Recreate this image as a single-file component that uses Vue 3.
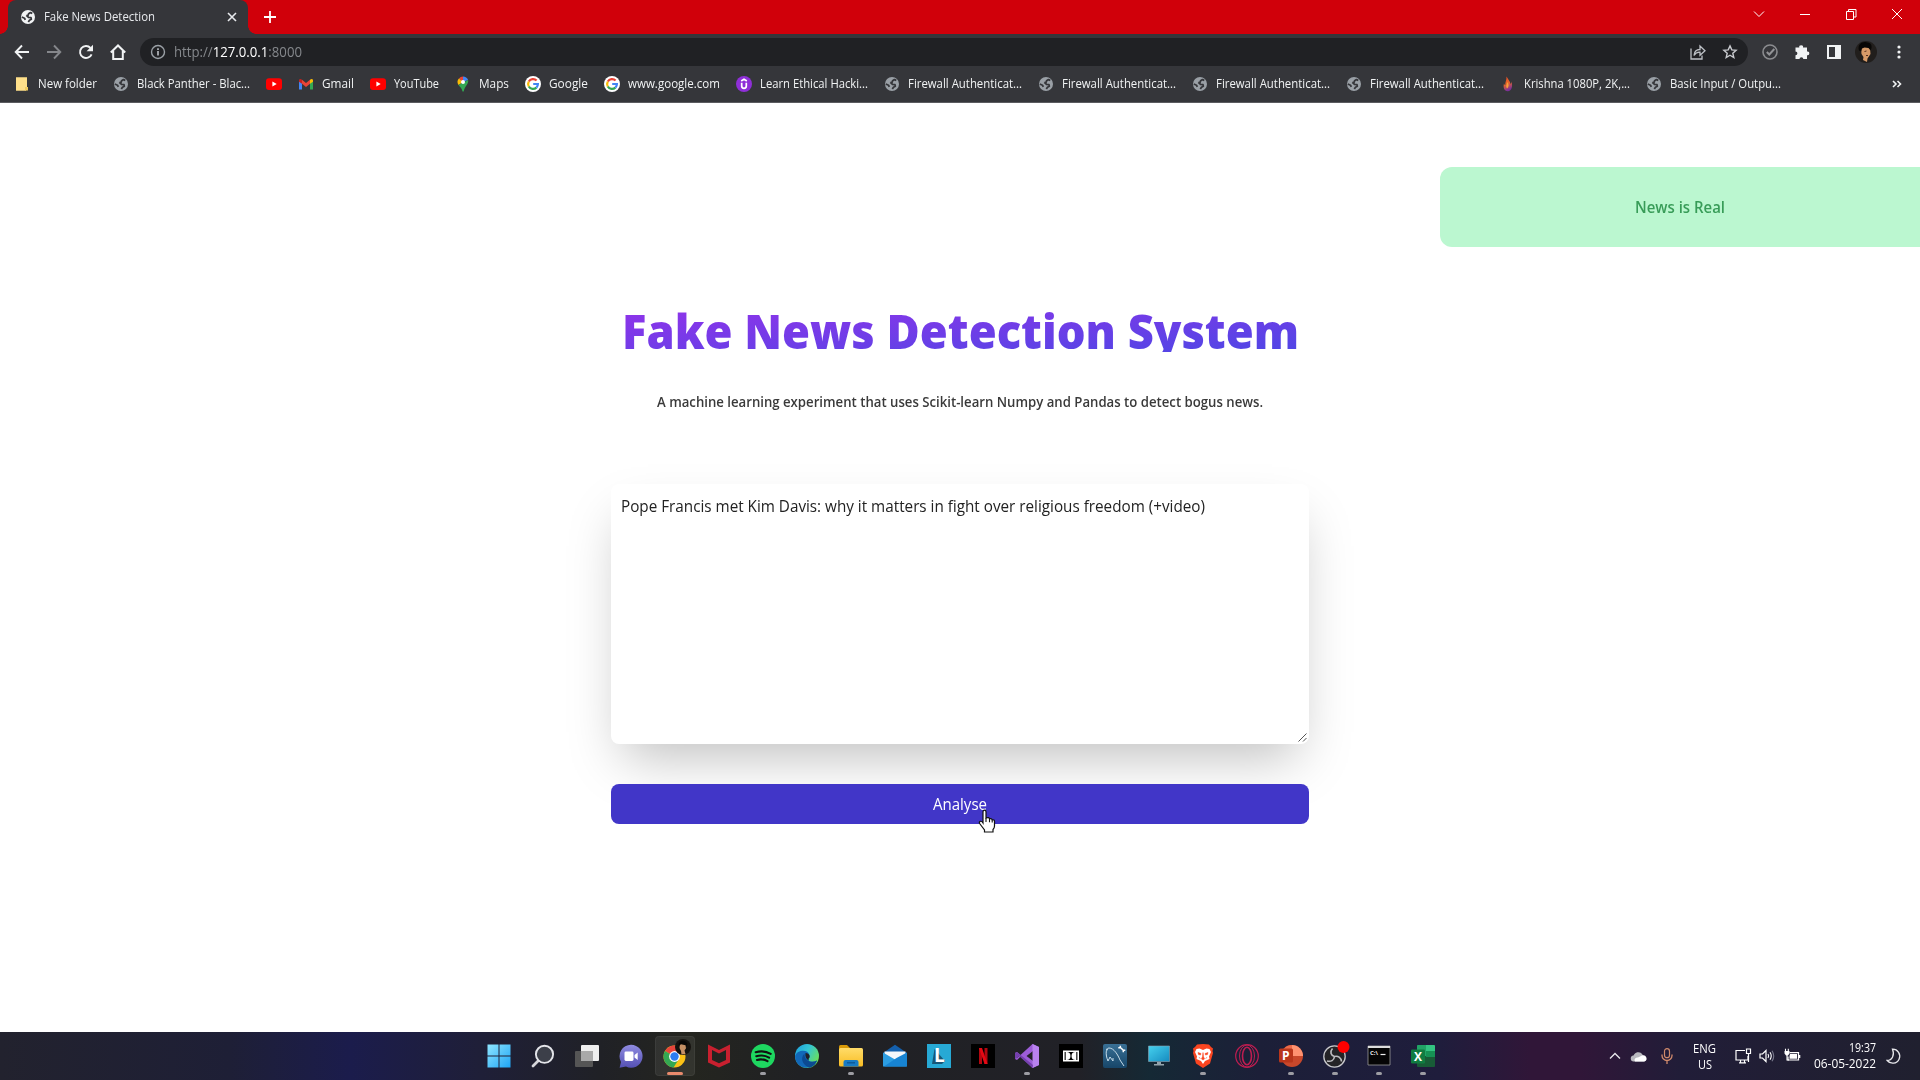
<script setup>
// Squeezes or stretches a line of text horizontally to the given width.
const vFit = {
  mounted(el, { value }) {
    const w = el.getBoundingClientRect().width
    el.style.transformOrigin = 'left center'
    el.style.transform = `scaleX(${value / w})`
    el.style.marginRight = `${value - w}px`
  },
}

const globe = (c) =>
  `<circle cx="8" cy="8" r="7" fill="${c}"/><path d="M12.300 4.300 10.500 3.600 8.600 4.800 8 6.300 6.300 6.600M6.300 6.400 8.500 8.300 11 8.600 11.300 10.300 9.500 11.300 8.300 13M1.800 8 4.500 9.200 5.300 10.800" fill="none" stroke="#35363a" stroke-width="1.800" stroke-linejoin="round"/>`
const youtube =
  '<rect x="0" y="2.3" width="16" height="11.6" rx="3" fill="#f00"/><path d="M6.4 5.6v5l4.3-2.5z" fill="#fff"/>'
const google =
  '<circle cx="8" cy="8" r="8" fill="#fff"/><g fill="none" stroke-width="2.2"><path d="M11.6 4.5A4.9 4.9 0 0 0 3.8 5.6" stroke="#ea4335"/><path d="M3.8 5.6a4.9 4.9 0 0 0 0 4.9" stroke="#fbbc05"/><path d="M3.8 10.5a4.9 4.9 0 0 0 7.6 1.1" stroke="#34a853"/><path d="M11.4 11.6A4.9 4.9 0 0 0 12.9 8H8.2" stroke="#4285f4"/></g>'
const grey = globe('#9aa0a6')

const bookmarks = [
  { t: 'New folder', w: 59, i: '<path d="M2 1.3h11v11l-1 2.4H2z" fill="#ffe08a"/><path d="M11 11h3v3.5h-3z" fill="#f2cd61"/>' },
  { t: 'Black Panther - Blac...', w: 113, i: grey },
  { t: '', w: 0, i: youtube },
  { t: 'Gmail', w: 32, i: '<path d="M1 4v9.5h3V7z" fill="#4285f4"/><path d="M15 4v9.5h-3V7z" fill="#34a853"/><path d="M4 3.8 8 7l4-3.2v4L8 11 4 7.8z" fill="#ea4335"/><path d="M1 4.6C1 2.7 2.6 2.6 4 3.8v4L1 5.8z" fill="#c5221f"/><path d="M15 4.6c0-1.9-1.6-2-3-.8v4l3-2z" fill="#fbbc04"/>' },
  { t: 'YouTube', w: 45, i: youtube },
  { t: 'Maps', w: 30, i: '<path d="M8 .6A5.3 5.3 0 0 0 3.9 2.5L8 6z" fill="#ea4335"/><path d="M8 .6c2.4 0 4.300 1.300 5.100 3.300L8 6z" fill="#4285f4"/><path d="M3.900 2.500A5.400 5.400 0 0 0 3.500 9L8 6z" fill="#fbbc04"/><path d="M13.100 3.900C14 8.200 9.600 10 8.700 15.400H7.500C7 12.300 5 11.200 3.500 9z" fill="#34a853"/><circle cx="8" cy="6" r="2" fill="#fff"/>' },
  { t: 'Google', w: 39, i: google },
  { t: 'www.google.com', w: 92, i: google },
  { t: 'Learn Ethical Hacki...', w: 108, i: '<circle cx="8" cy="8" r="8" fill="#8f2fd8"/><path d="M5.700 6.800V10a2.300 2.300 0 0 0 4.600 0V6.800M5.200 4.900 8 3.200l2.800 1.700" fill="none" stroke="#fff" stroke-width="1.700"/>' },
  { t: 'Firewall Authenticat...', w: 114, i: grey },
  { t: 'Firewall Authenticat...', w: 114, i: grey },
  { t: 'Firewall Authenticat...', w: 114, i: grey },
  { t: 'Firewall Authenticat...', w: 114, i: grey },
  { t: 'Krishna 1080P, 2K,...', w: 106, i: '<path d="M6.500.5c1 2 3.500 4.500 4 7.500 1.500-1 .8-3 .8-3 1.800 5 .5 10-3.500 10.300C4 15.200 3 11 4 7.500c.5 1 .8 1.500 1.300 1.500C5 6 6.800 4 6.500.5z" fill="url(#flame)"/><path d="M7.500 6c1.500 2.500 1.500 5-.5 6.500-1.500-2-.5-4 .5-6.500z" fill="#f9a13a"/>' },
  { t: 'Basic Input / Outpu...', w: 111, i: grey },
]

const apps = [
  { n: 'start', i: '<path d="M.5.500h11v11H.5zM12.500.500h11v11h-11zM.5 12.500h11v11H.5zM12.500 12.500h11v11h-11z" fill="url(#win)"/>' },
  { n: 'search', i: '<path d="M7.500 16.500 2 22" stroke="#d5d6da" stroke-width="2.800" stroke-linecap="round"/><circle cx="13.500" cy="10.300" r="8.600" fill="#3c3f49" stroke="#e4e5ea" stroke-width="1.900"/>' },
  { n: 'tasks', i: '<rect x="6" y="1" width="18" height="16" rx="1" fill="#eee"/><rect x="0" y="7" width="18" height="16" rx="1" fill="#555"/><path d="M6 7h12v10H6z" fill="#a9a9a9"/>' },
  { n: 'chat', i: '<path d="M12 .8A11.500 11.500 0 1 1 7 22.600L.6 23.700 2 18A11.500 11.500 0 0 1 12 .8z" fill="url(#chat)"/><rect x="5.500" y="7.500" width="9" height="9.500" rx="1.400" fill="#fff"/><path d="m15.500 11 3.200-2.500v7.500l-3.200-2.500z" fill="#fff"/>' },
  { n: 'chrome', active: true, i: '<circle cx="11.500" cy="12.500" r="11" fill="#fbc116"/><path d="M11.500 12.500 2 7A11 11 0 0 1 21 7z" fill="#e8453c"/><path d="M11.500 12.500 2 7a11 11 0 0 0 8.500 16.500L16 15z" fill="#34a853"/><circle cx="11.500" cy="12.500" r="5.400" fill="#fff"/><circle cx="11.500" cy="12.500" r="4.200" fill="#2d7cf0"/><circle cx="20" cy="3" r="8" fill="#15120f"/><path d="M17-1q3-2 6 .5l.5 4-2 3 1 3.500-4 .5-.5-3.500-1.500-3z" fill="#c69065"/><path d="M15.800 2c-1-6 7-7 8.500-2l-1 6-.8-4.800-4.500-1z" fill="#090807"/>' },
  { n: 'mcafee', i: '<path d="M1 .5 12 6 23 .5v18L12 23.500 1 18.500zM5 6v10l7 3.200 7-3.200V6l-7 3.500z" fill="#c8202f" fill-rule="evenodd"/>' },
  { n: 'spotify', dot: true, i: '<circle cx="12" cy="12" r="12" fill="#1ed760"/><path d="M4.700 8.200q8-2.200 15 1.600M5.300 12.200q7-2 12.800 1.500M6 15.900q5.800-1.500 10.500 1.300" fill="none" stroke="#111" stroke-width="2.100" stroke-linecap="round"/>' },
  { n: 'edge', i: '<circle cx="12" cy="12" r="12" fill="url(#edge)"/><path d="M.1 12C2 6 13 4.500 14.500 11.500 15 14 13.500 14 13.500 15.500c0 2.500 5 3 8.500 1-3 6-9 8.500-14.500 6.500C3 21 0 17 .1 12z" fill="#1268b8"/><path d="M9.500 9.500C4 15 9 22 14.500 23.700 18 23 21 20 22 16.500c-6 3.500-13 0-12.500-7z" fill="#0c4a91"/><path d="M13.500 15.500c0-1.500 1.500-1.500 1-4-.4-1.300-2-2.500-4-2.500-.5 3.500.5 6 3.500 7.500z" fill="#202126"/>' },
  { n: 'explorer', dot: true, i: '<path d="M0 2.500Q0 1 1.500 1H8l3 3-2 3H0z" fill="#d99a08"/><rect y="4" width="24" height="18.500" rx="1.500" fill="url(#folder)"/><path d="M4.500 22.500V18q0-2 2-2h11q2 0 2 2v4.500z" fill="#187bc4"/><path d="M8 18.800h8" stroke="#0c5593" stroke-width="1.300"/>' },
  { n: 'mail', i: '<path d="M0 9 12 .8 24 9v4H0z" fill="#1460ad"/><path d="M1.500 7.500h21V16l-10 4-11-4z" fill="#f4f7fa"/><path d="M0 8.500v14h24z" fill="#2c9de2"/><path d="M24 8.500v14H1L13.500 14z" fill="#1784d3"/>' },
  { n: 'letter', i: '<path d="M0 0h24v24H0z" fill="#27a9d5"/><path d="M7.500 5 5 20h10l3-3z" fill="#165777"/><text x="7" y="17.500" font-size="19" font-weight="700" fill="#fff">L</text>' },
  { n: 'netflix', i: '<path d="M0 0h24v24H0z" fill="#000"/><path d="M8 4h3v16H8zM13.500 4h3v16h-3z" fill="#b20710"/><path d="M8 4h3l5.500 16h-3z" fill="#e50914"/>' },
  { n: 'studio', dot: true, i: '<path d="m17.500 0 6.500 3v18l-6.500 3-12-11.500L2 16l-2-1V9l2-1 3.500 3zM18 7l-6.500 5 6.500 5zM2 10v4l2-2z" fill="#9c5dd7" fill-rule="evenodd"/><path d="m17.500 0 6.500 3v18l-6.500 3z" fill="#b982ef"/><path d="m0 9 2-1 16 13-.5 3L4 12 2 14l-2 1z" fill="#7540ae"/>' },
  { n: 'dolby', i: '<path d="M0 0h24v24H0z" fill="#000"/><path d="M4.800 7.300h14.400v9.400H4.800z" fill="none" stroke="#fff" stroke-width="1.600"/><path d="M6.700 8h.8a4 4 0 0 1 0 8h-.8zM17.300 8h-.8a4 4 0 0 0 0 8h.8z" fill="#fff"/>' },
  { n: 'mysql', i: '<rect width="24" height="24" rx="2" fill="url(#sql)"/><path d="M5 17C2 10 3 4 6 4c5 0 9 7 11 12l4 6M5 17l2-4 3 4v-3M3 5l2 1" fill="none" stroke="#c7dce9" stroke-width="1"/><path d="m17 3 4 4M17.300 1.800v2h-2M22.300 6.300h-2v2" fill="none" stroke="#fff" stroke-width="1.500"/>' },
  { n: 'pc', i: '<path d="M1.500 2h21v15.500h-21z" fill="url(#pc)" stroke="#8ba5b4" stroke-width=".6"/><path d="M10 18h4v2h3v1.500H7V20h3z" fill="#93a3ab"/>' },
  { n: 'brave', dot: true, i: '<path d="m6 .5 6-.5 6 .5 2 2.500 2 1.500-.5 2.500.500 2-3 10.500L12 24l-7-4.500L2 9l.5-2L2 4.500 4 3z" fill="#fa4520"/><path d="m5.500 5 3-.5L12 6l3.500-1.500 3 .5 1.500 3-2 4.500.5 2.500L14 17l-2 3-2-3-4.500-2L6 12.500 4 8z" fill="#fff"/><path d="m7 8.500 3 1-.5 1.500L7.500 10.500zM17 8.500l-3 1 .5 1.500 2-.5zM12 8.500l.5 4 1 2.500-1.500 1-1.500-1 1-2.500zM8 13l1.500 2M16 13l-1.500 2" fill="#fa4520" stroke="#fa4520" stroke-width=".5"/>' },
  { n: 'opera', i: '<g fill="none" stroke="#bd1d50"><circle cx="12" cy="12" r="11.300" stroke-width="1.200"/><ellipse cx="12" cy="12" rx="7.500" ry="11" stroke-width="1"/><ellipse cx="12" cy="12" rx="4.500" ry="8.700" stroke-width="1.600"/></g>' },
  { n: 'powerpoint', dot: true, i: '<circle cx="13" cy="12" r="11" fill="#c9482b"/><path d="M13 1a11 11 0 0 1 11 11H13z" fill="#ff9270"/><path d="M13 1a11 11 0 0 0-11 11h11z" fill="#ec6b4a"/><rect y="4.500" width="14" height="14" rx="1.500" fill="#b9361b"/><text x="3" y="16" font-size="12" font-weight="700" fill="#fff">P</text>' },
  { n: 'obs', dot: true, i: '<circle cx="11.500" cy="12.500" r="10.700" fill="#242326" stroke="#c7c7cb" stroke-width="1.300"/><path d="M9.500 4.500C6.500 8 8 11.500 11.500 12.500M11.500 12.500c3.500-1 6.500 1 7 5M11.500 12.500c-.5 4-3.500 5.500-7.500 4.500" fill="none" stroke="#bcbcc0" stroke-width="1.600"/><circle cx="20.500" cy="3" r="6" fill="#f00"/>' },
  { n: 'cmd', dot: true, i: '<path d="M1 2h22v19H1z" fill="#050505" stroke="#999" stroke-width=".8"/><path d="M1 2h22v2H1z" fill="#ddd"/><text x="3" y="11" font-size="6" font-weight="700" fill="#eee">C:\\</text><path d="M13.500 10.500h5" stroke="#eee" stroke-width="1.200"/>' },
  { n: 'excel', dot: true, i: '<rect x="6" y="1" width="18" height="22" rx="1" fill="#185c37"/><path d="M6 2q0-1 1-1h8v11H6z" fill="#21a366"/><path d="M15 1h8q1 0 1 1v5h-9z" fill="#33c481"/><path d="M15 7h9v6h-9z" fill="#169154"/><rect y="5.500" width="14" height="14" rx="1.300" fill="#107c41"/><text x="3" y="16.800" font-size="12" font-weight="700" fill="#fff">X</text>' },
]
</script>

<template>
  <div class="screen">
    <svg class="defs" width="0" height="0">
      <defs>
        <linearGradient id="flame" x1="0" y1="0" x2=".3" y2="1"><stop offset="0" stop-color="#f04a24" /><stop offset=".55" stop-color="#e5672a" /><stop offset="1" stop-color="#7b2f9a" /></linearGradient>
        <linearGradient id="win" x1="0" y1="0" x2="1" y2="1"><stop offset="0" stop-color="#8fe6ff" /><stop offset="1" stop-color="#1ea5f5" /></linearGradient>
        <linearGradient id="chat" x1="0" y1="0" x2="0" y2="1"><stop offset="0" stop-color="#8f8be0" /><stop offset="1" stop-color="#5450b4" /></linearGradient>
        <linearGradient id="edge" x1="0" y1="0" x2="1" y2=".6"><stop offset="0" stop-color="#1b9de0" /><stop offset=".5" stop-color="#34c5d4" /><stop offset="1" stop-color="#6ae05a" /></linearGradient>
        <linearGradient id="folder" x1="0" y1="0" x2="0" y2="1"><stop offset="0" stop-color="#ffdc69" /><stop offset="1" stop-color="#f9bd24" /></linearGradient>
        <linearGradient id="sql" x1="0" y1="0" x2="0" y2="1"><stop offset="0" stop-color="#397095" /><stop offset="1" stop-color="#174669" /></linearGradient>
        <linearGradient id="pc" x1="0" y1="0" x2="1" y2="1"><stop offset="0" stop-color="#45d1ee" /><stop offset="1" stop-color="#168bc0" /></linearGradient>
      </defs>
    </svg>

    <header class="tabs">
      <div class="tab">
        <svg class="i16" viewBox="0 0 16 16" v-html="globe('#f1f3f4')"></svg>
        <span v-fit="111" class="t tab-title">Fake News Detection</span>
        <svg class="tab-x" viewBox="0 0 10 10"><path d="m1 1 8 8M9 1 1 9" stroke="#e8eaed" stroke-width="1.6" /></svg>
      </div>
      <svg class="plus" viewBox="0 0 12 12"><path d="M6 0v12M0 6h12" stroke="#fff" stroke-width="1.8" /></svg>
      <div class="window-buttons">
        <svg viewBox="0 0 12 12"><path d="m1 3.500 5 5 5-5" /></svg>
        <svg viewBox="0 0 12 12"><path d="M1 6.500h10" /></svg>
        <svg viewBox="0 0 12 12"><path d="M1.500 3.500h7v8h-7zM3.500 3.500v-2h7.500v7.500H8.500" /></svg>
        <svg viewBox="0 0 12 12"><path d="m1 1 10 10M11 1 1 11" /></svg>
      </div>
    </header>

    <div class="toolbar">
      <svg class="i16" viewBox="0 0 16 16"><path d="M15 8H2M8 1.500 1.700 8 8 14.500" fill="none" stroke="#f1f3f4" stroke-width="1.900" /></svg>
      <svg class="i16" viewBox="0 0 16 16"><path d="M1 8h13M8 1.500 14.300 8 8 14.500" fill="none" stroke="#85878b" stroke-width="1.900" /></svg>
      <svg class="i16" viewBox="0 0 16 16"><path d="M13.600 10.300A6 6 0 1 1 12.500 4" fill="none" stroke="#f1f3f4" stroke-width="1.900" /><path d="M15 .8v6.400H8.600z" fill="#f1f3f4" /></svg>
      <svg class="i16" viewBox="0 0 16 16"><path d="M.8 8.500 8 1.500l7.200 7M3.200 7v8h9.600V7" fill="none" stroke="#f1f3f4" stroke-width="2" /></svg>
      <div class="omnibox">
        <svg class="i16" viewBox="0 0 16 16"><circle cx="8" cy="8" r="6.500" fill="none" stroke="#9aa0a6" stroke-width="1.400" /><path d="M8 7v4.500M8 4.300v1.600" stroke="#bdc1c6" stroke-width="1.600" /></svg>
        <span v-fit="128" class="t url">http://<b>127.0.0.1</b>:8000</span>
        <svg class="i16 share" viewBox="0 0 16 16"><path d="M1 4.500V15h11v-3.500M4 11.500c.3-4 2.500-6 6-6V2l5 4.700-5 4.600V8.200C7.500 8 5.500 9 4 11.500z" fill="none" stroke="#bdc1c6" stroke-width="1.300" /></svg>
        <svg class="i16" viewBox="0 0 16 16"><path d="m8 1.900 1.800 4 4.300.4-3.300 2.900 1 4.300L8 11.200l-3.800 2.300 1-4.300-3.300-2.900 4.300-.4z" fill="none" stroke="#c8cace" stroke-width="1.400" /></svg>
      </div>
      <svg class="i16" viewBox="0 0 16 16"><circle cx="8" cy="8" r="7" fill="none" stroke="#8b8c8f" stroke-width="1.600" /><path d="m4.800 8 2.500 2.500 5-5.500" fill="none" stroke="#929396" stroke-width="2" /></svg>
      <svg class="i16" viewBox="0 0 16 16"><path d="M1.500 3.500h3.800a1.900 1.900 0 1 1 3.700 0h4v4a1.900 1.900 0 1 1 0 3.700v3.900H9.300a1.900 1.900 0 0 0-3.800 0h-4v-3.900a1.900 1.900 0 0 0 0-3.800z" fill="#f1f3f4" /></svg>
      <svg class="i16" viewBox="0 0 16 16"><path d="M1 1h14v14H1zM3 3v10h6V3z" fill="#f1f3f4" fill-rule="evenodd" /></svg>
      <svg class="avatar" viewBox="0 0 22 22"><circle cx="11" cy="11" r="11" fill="#211e1c" /><path d="m6 7 4-2 5 2 .5 6-3 4.500-.5 3.500-4-2 .5-3-2-3z" fill="#d69a68" /><path d="M4 9.500C2 3 8 0 12 1.500c4-.5 6 4 3.500 8L13.500 7 9.500 6.500 7 7.500l-.8 3z" fill="#080706" /><path d="m9.500 10.500 2-.5M11 14.500h2" stroke="#553020" /></svg>
      <svg class="kebab" viewBox="0 0 4 16"><circle cx="2" cy="3" r="1.600" /><circle cx="2" cy="8" r="1.600" /><circle cx="2" cy="13" r="1.600" /></svg>
    </div>

    <nav class="bookmarks">
      <div v-for="(b, k) in bookmarks" :key="k" class="bookmark">
        <svg class="i16" viewBox="0 0 16 16" v-html="b.i"></svg>
        <span v-if="b.t" v-fit="b.w" class="t">{{ b.t }}</span>
      </div>
      <svg class="more" viewBox="0 0 10 8"><path d="m1 1 3 3-3 3M5.500 1l3 3-3 3" fill="none" stroke="#f1f3f4" stroke-width="1.600" /></svg>
    </nav>

    <main class="page">
      <div class="toast"><span v-fit="90" class="t">News is Real</span></div>
      <h1 v-fit="677" class="t">Fake News Detection System</h1>
      <p class="lead"><span v-fit="606" class="t">A machine learning experiment that uses Scikit-learn Numpy and Pandas to detect bogus news.</span></p>
      <div class="news">
        <span v-fit="584" class="t">Pope Francis met Kim Davis: why it matters in fight over religious freedom (+video)</span>
        <svg class="grip" viewBox="0 0 9 9"><path d="M.5 8.500l8-8M5 8.500l3.500-3.500" stroke="#555" stroke-width="1" /></svg>
      </div>
      <button class="analyse">
        <span v-fit="54" class="t">Analyse</span>
        <svg class="pointer" viewBox="0 0 18 24"><path d="M5 13V3q0-1.800 1.500-1.800T8 3v6q3-1 3.500.8 2.200-.6 2.700 1 2.300-.3 2.300 1.700V17q0 2-1.500 3.500V23H6.500v-2L2 15q-1.500-2.200.3-2.700Q3.700 12 5 14z" fill="#fff" stroke="#111" stroke-width="1.200" /><path d="M8 9v4M11.500 10v3.300M14.200 11v2.500" stroke="#111" stroke-width="1.100" /></svg>
      </button>
    </main>

    <footer class="taskbar">
      <div class="apps">
        <div v-for="a in apps" :key="a.n" class="app" :class="{ active: a.active }">
          <svg class="app-icon" viewBox="0 0 24 24" v-html="a.i"></svg>
          <i v-if="a.dot || a.active" class="run"></i>
        </div>
      </div>
      <div class="tray">
        <svg class="up" viewBox="0 0 12 8"><path d="m1 6.500 5-5 5 5" fill="none" stroke="#e8e8ec" stroke-width="1.300" /></svg>
        <svg class="cloud" viewBox="0 0 16 11"><path d="M3 10.500a3 3 0 0 1-.5-6A5 5 0 0 1 11 3l1.500 2a2.800 2.800 0 0 1 .5 5.500z" fill="#b9b9bf" /><path d="M4 10.500C2.500 8 5 6.500 7 6.500l4-2a3.200 3.200 0 0 1 2.500 6z" fill="#fff" /></svg>
        <svg class="mic" viewBox="0 0 12 16"><rect x="3.500" y=".7" width="5" height="9" rx="2.500" fill="none" stroke="#d08a6c" stroke-width="1.200" /><path d="M1 6.500v1a5 5 0 0 0 10 0v-1M6 12.500V16" fill="none" stroke="#d08a6c" stroke-width="1.300" /></svg>
        <div class="lang"><span v-fit="23" class="t">ENG</span><span v-fit="14" class="t">US</span></div>
        <svg class="i16 net" viewBox="0 0 16 16"><path d="M10 2.500H1v9.500h12V8M4 14.800h7M5.500 12v2.800M9.500 12v2.800" fill="none" stroke="#fff" stroke-width="1.200" /><path d="M11.500 1h4v4.500h-4zM13.500 5.500V14" fill="none" stroke="#fff" stroke-width="1.200" /></svg>
        <svg class="i16 vol" viewBox="0 0 16 16"><path d="M1 6h2.500L7 2.500v11L3.500 10H1z" fill="none" stroke="#fff" stroke-width="1.200" /><path d="M9 6q1.300 2 0 4M11 4.300q2.500 3.700 0 7.400" fill="none" stroke="#fff" stroke-width="1.100" /><path d="M13 2.700q3.500 5.300 0 10.600" fill="none" stroke="#77788a" stroke-width="1.100" /></svg>
        <svg class="i16 bat" viewBox="0 0 16 16"><path d="M5.500 4.600h9V12H4V8.500" fill="none" stroke="#fff" stroke-width="1.200" /><path d="M6 6h7v4.700H5.500V8zM15 7h1.300v3H15zM.5 3h5v2.500L4 7.500H2L.5 5.500z" fill="#fff" /><path d="M1.500.8V3M4.300.8V3M3 7v5h2" fill="none" stroke="#fff" stroke-width="1.100" /></svg>
        <div class="clock"><span v-fit="27" class="t">19:37</span><span v-fit="62" class="t">06-05-2022</span></div>
        <svg class="moon" viewBox="0 0 14 16"><path d="M6.500 1.200A7 7 0 1 1 1.200 12.500C6 12.500 9 7 6.500 1.200z" fill="none" stroke="#e8e8ec" stroke-width="1.300" /></svg>
      </div>
    </footer>
  </div>
</template>

<style>
body { margin: 0; }
</style>

<style scoped>
.screen {
  width: 1920px;
  height: 1080px;
  overflow: hidden;
  display: flex;
  flex-direction: column;
  font-family: "Open Sans", "Noto Sans", sans-serif;
  background: #fff;
}
.defs { position: absolute; }
svg { flex: none; display: block; overflow: visible; }
.i16 { width: 16px; height: 16px; }
.t { display: inline-block; flex: none; white-space: nowrap; }

.tabs { height: 34px; background: #d0000a; display: flex; align-items: flex-start; flex: none; }
.tab {
  position: relative;
  box-sizing: border-box;
  width: 240px;
  height: 34px;
  margin-left: 8px;
  padding: 0 11px 0 12px;
  display: flex;
  align-items: center;
  background: #35363a;
  border-radius: 8px 8px 0 0;
}
.tab::before, .tab::after { content: ""; position: absolute; bottom: 0; width: 8px; height: 8px; }
.tab::before { left: -8px; background: radial-gradient(circle at 0 0, transparent 7.5px, #35363a 8px); }
.tab::after { right: -8px; background: radial-gradient(circle at 100% 0, transparent 7.5px, #35363a 8px); }
.tab-title { margin-left: 8px; font-size: 12px; line-height: 16px; color: #e8eaed; }
.tab-x { width: 10px; height: 10px; margin-left: auto; }
.plus { width: 12px; height: 12px; margin: 11px 0 0 16px; }
.window-buttons { display: flex; gap: 34px; margin: 8px 17px 0 auto; }
.window-buttons svg { width: 12px; height: 12px; fill: none; stroke: #fff; stroke-width: 1; }

.toolbar { height: 36px; background: #35363a; display: flex; align-items: center; gap: 16px; padding: 0 19px 0 14px; flex: none; }
.omnibox {
  box-sizing: border-box;
  width: 1608px;
  height: 28px;
  margin-left: -2px;
  margin-right: -2px;
  padding: 0 10px;
  border-radius: 14px;
  background: #202124;
  display: flex;
  align-items: center;
}
.url { margin-left: 8px; font-size: 14px; line-height: 20px; color: #85888c; }
.url b { font-weight: 400; color: #fff; }
.share { margin: 0 16px 0 auto; }
.avatar { width: 22px; height: 22px; margin: 0 -3px; }
.kebab { width: 4px; height: 16px; fill: #f1f3f4; margin-left: auto; }

.bookmarks {
  box-sizing: border-box;
  height: 33px;
  padding: 0 18px 4px 14px;
  background: #35363a;
  border-bottom: 1px solid #5b5c60;
  display: flex;
  align-items: center;
  gap: 16px;
  font-size: 12px;
  line-height: 16px;
  color: #f1f3f4;
  flex: none;
}
.bookmark { display: flex; align-items: center; gap: 8px; }
.more { width: 10px; height: 8px; margin-left: auto; }

.page { height: 929px; position: relative; display: flex; flex-direction: column; align-items: center; flex: none; }
.toast {
  position: absolute;
  right: 0;
  top: 64px;
  width: 480px;
  height: 80px;
  border-radius: 12px 0 0 12px;
  background: #bbf7d0;
  color: #389c58;
  font-size: 16px;
  font-weight: 600;
  display: flex;
  align-items: center;
  justify-content: center;
}
h1 {
  box-sizing: border-box;
  height: 48px;
  margin: 201px 0 0;
  padding-top: 3px;
  font-size: 48px;
  line-height: 48px;
  font-weight: 800;
  color: transparent;
  background: linear-gradient(to bottom right, #9333ea, #4f46e5);
  -webkit-background-clip: text;
  background-clip: text;
}
.lead { margin: 40px 0 0; font-size: 14px; line-height: 20px; font-weight: 600; color: #3a3a3a; }
.news {
  position: relative;
  box-sizing: border-box;
  width: 698px;
  height: 260px;
  margin-top: 72px;
  padding: 10px;
  border-radius: 8px;
  background: #fff;
  box-shadow: 0 25px 50px -12px rgba(0, 0, 0, 0.25);
  font-size: 16px;
  line-height: 24px;
  color: #222;
}
.grip { position: absolute; right: 2px; bottom: 2px; width: 9px; height: 9px; }
.analyse {
  position: relative;
  width: 698px;
  height: 40px;
  margin-top: 40px;
  padding: 0;
  border: 0;
  border-radius: 8px;
  background: #4136c8;
  color: #fff;
  font: 16px/24px "Open Sans", "Noto Sans", sans-serif;
  display: flex;
  justify-content: center;
  align-items: center;
}
.pointer { position: absolute; left: 367px; top: 25px; width: 18px; height: 24px; }

.taskbar {
  height: 48px;
  flex: none;
  display: flex;
  align-items: stretch;
  justify-content: space-between;
  padding-left: 477px;
  background: linear-gradient(90deg, #22222e 0, #1e1f36 230px, #1b1c4c 350px, #1f1f38 480px, #202126 600px, #24251f 690px, #202124 800px, #212127 1080px, #152935 1150px, #1c1f38 1260px, #1f1d3c 1440px, #301638 1530px, #301638 1580px, #211d38 1680px, #20202f 1920px);
}
.apps { display: flex; }
.app { position: relative; width: 44px; height: 48px; display: flex; align-items: center; justify-content: center; }
.app.active::before { content: ""; position: absolute; left: 2px; top: 4px; width: 40px; height: 40px; border-radius: 4px; background: rgba(255, 255, 255, 0.07); box-shadow: inset 0 0 0 1px rgba(255, 255, 255, 0.05); }
.app-icon { width: 24px; height: 24px; position: relative; }
.run { position: absolute; bottom: 5px; left: 19px; width: 6px; height: 3px; border-radius: 2px; background: #9d9da3; }
.active .run { left: 14px; width: 16px; background: #e88a6c; }
.tray { display: flex; align-items: center; padding-right: 20px; color: #fff; font-size: 12px; line-height: 16px; }
.up { width: 12px; height: 8px; margin-right: 10px; }
.cloud { width: 16px; height: 11px; margin-right: 14px; }
.mic { width: 12px; height: 16px; margin-right: 20px; }
.lang, .clock { display: flex; flex-direction: column; }
.lang { align-items: center; width: 23px; margin-right: 19px; padding-top: 2px; }
.net { margin-right: 8px; }
.vol { margin-right: 9px; }
.bat { margin-right: 14px; }
.clock { align-items: flex-end; width: 62px; margin-right: 10px; }
.moon { width: 14px; height: 16px; }
</style>
